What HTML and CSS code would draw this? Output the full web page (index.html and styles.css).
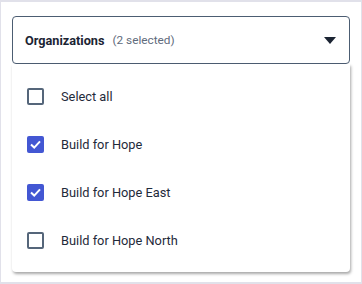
FILE: index.html
```html
<!DOCTYPE html>
<html>
<head>
<meta charset="utf-8">
<link rel="stylesheet" href="styles.css">
</head>
<body>
<div class="frame">
  <div class="select">
    <div class="trigger">
      <span class="label">Organizations</span>
      <span class="count">(2 selected)</span>
      <svg class="caret" width="12" height="7" viewBox="0 0 12 7"><path d="M0 0 H12 L6 7 Z" fill="#1b2433"/></svg>
    </div>
    <ul class="menu">
      <li class="option"><span class="box"></span><span class="text">Select all</span></li>
      <li class="option"><span class="box checked"><svg width="17" height="17" viewBox="0 0 17 17"><path d="M4 8.6 L7.2 11.6 L13 5.4" fill="none" stroke="#fff" stroke-width="2"/></svg></span><span class="text">Build for Hope</span></li>
      <li class="option"><span class="box checked"><svg width="17" height="17" viewBox="0 0 17 17"><path d="M4 8.6 L7.2 11.6 L13 5.4" fill="none" stroke="#fff" stroke-width="2"/></svg></span><span class="text">Build for Hope East</span></li>
      <li class="option"><span class="box"></span><span class="text">Build for Hope North</span></li>
    </ul>
  </div>
</div>
</body>
</html>
```
FILE: styles.css
```css
html, body {
  margin: 0;
  padding: 0;
  background: #fff;
}
body {
  font-family: Roboto, "Noto Sans", sans-serif;
  color: #1f2a3a;
}
.frame {
  box-sizing: border-box;
  width: 362px;
  height: 284px;
  border: 2px solid #e1e1ea;
  border-right-width: 1px;
  border-left-width: 1px;
  padding: 14px 11px 0 11px;
}
.select {
  width: 338px;
}
.trigger {
  box-sizing: border-box;
  height: 48px;
  border: 1px solid #4c5d72;
  border-radius: 4px;
  display: flex;
  align-items: center;
  padding: 0 12px 0 12px;
}
.label {
  font-weight: 700;
  font-size: 12.7px;
  color: #1b2433;
}
.count {
  font-size: 11.8px;
  color: #5f6b7c;
  margin-left: 8px;
}
.caret {
  margin-left: auto;
  margin-right: 1px;
}
.menu {
  list-style: none;
  margin: 0;
  padding: 8px 0 8px 0;
  background: #fff;
  border-radius: 0 0 4px 4px;
  box-shadow: 1px 2px 3px rgba(0,0,0,0.35);
}
.option {
  height: 48px;
  display: flex;
  align-items: center;
  padding-left: 15px;
}
.box {
  box-sizing: border-box;
  width: 17px;
  height: 17px;
  border: 2px solid #55667a;
  border-radius: 2px;
  flex: none;
  display: flex;
}
.box.checked {
  border: none;
  background: #4357d3;
}
.text {
  margin-left: 17px;
  font-size: 12.8px;
  color: #1f2a3a;
}
```
